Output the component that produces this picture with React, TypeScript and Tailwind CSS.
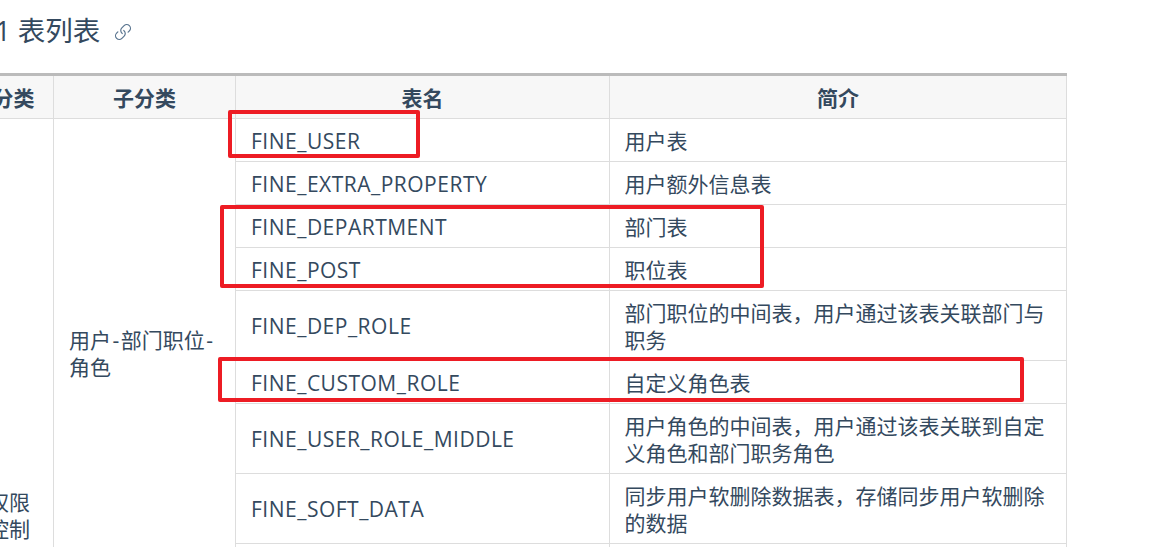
import { Link } from "lucide-react";

const rows: [string, string[], number][] = [
  ["FINE_USER", ["用户表"], 43],
  ["FINE_EXTRA_PROPERTY", ["用户额外信息表"], 43],
  ["FINE_DEPARTMENT", ["部门表"], 43],
  ["FINE_POST", ["职位表"], 43],
  ["FINE_DEP_ROLE", ["部门职位的中间表，用户通过该表关联部门与职务"], 70],
  ["FINE_CUSTOM_ROLE", ["自定义角色表"], 43],
  ["FINE_USER_ROLE_MIDDLE", ["用户角色的中间表，用户通过该表关联到自定义角色和部门职务角色"], 70],
  ["FINE_SOFT_DATA", ["同步用户软删除数据表，存储同步用户软删除的数据"], 70],
];

const firstCell = "border border-[#dddddd] pl-[16px] pr-[15px] py-0 align-middle";
const subCell = "border border-[#dddddd] px-[15px] py-0 align-middle";
const descCell = "border border-[#dddddd] pl-[14.5px] pr-[15px] pt-[2px] pb-0 align-middle";
const nameCell = "border border-[#dddddd] px-[15px] pt-[2px] pb-0 align-middle tracking-[0.5px]";
const th = "border border-[#dddddd] border-t-0 bg-[#f7f7f7] font-bold text-center px-[15px] pt-[2px] pb-0";

export default function App() {
  return (
    <div
      className="relative h-[547px] w-[1153px] overflow-hidden bg-white text-[#34495e] text-[21px] leading-[27px]"
      style={{ fontFamily: '"Open Sans","Noto Sans CJK SC",sans-serif' }}
    >
      <div className="flex h-[73px] items-start -ml-[5px] pt-[12px]">
        <h2 className="flex items-center text-[27.5px] leading-[38px] font-normal">
          <span>1 表列表</span>
          <Link className="ml-[14px] mt-[1px] text-[#5a7590]" size={18} strokeWidth={1.6} style={{ transform: "scaleX(-1) rotate(90deg)" }} />
        </h2>
      </div>
      <table className="-ml-[29px] w-[1095px] table-fixed border-collapse border-t-[3px] border-t-[#bbbbbb]">
        <colgroup>
          <col className="w-[82px]" />
          <col className="w-[182px]" />
          <col className="w-[374px]" />
          <col className="w-[457px]" />
        </colgroup>
        <thead>
          <tr className="h-[44px]">
            <th className={`${th} pl-[17px]`}>分类</th>
            <th className={th}>子分类</th>
            <th className={th}>表名</th>
            <th className={th}>简介</th>
          </tr>
        </thead>
        <tbody>
          {rows.map(([name, desc, h], i) => (
            <tr key={name} style={{ height: h }}>
              {i === 0 && (
                <td rowSpan={10} className={firstCell}>
                  权限控制
                </td>
              )}
              {i === 0 && (
                <td rowSpan={9} className={subCell}>
                  用户<span className="px-[1.5px]">-</span>部门职位<span className="px-[1.5px]">-</span>角色
                </td>
              )}
              <td className={nameCell}>{name}</td>
              <td className={descCell}>{desc[0]}</td>
            </tr>
          ))}
          <tr className="h-[46px]">
            <td className={nameCell}>FINE_USER_SYNC</td>
            <td className={descCell}>同步用户表</td>
          </tr>
          <tr className="h-[324px]">
            <td colSpan={3} className={descCell}></td>
          </tr>
        </tbody>
      </table>
      <div className="absolute left-[228px] top-[110px] h-[48px] w-[192px] rounded-[2px] border-[4px] border-[#ed1c24]" />
      <div className="absolute left-[220px] top-[205px] h-[83px] w-[544px] rounded-[2px] border-[4px] border-[#ed1c24]" />
      <div className="absolute left-[218px] top-[357px] h-[45px] w-[806px] rounded-[2px] border-[4px] border-[#ed1c24]" />
    </div>
  );
}
